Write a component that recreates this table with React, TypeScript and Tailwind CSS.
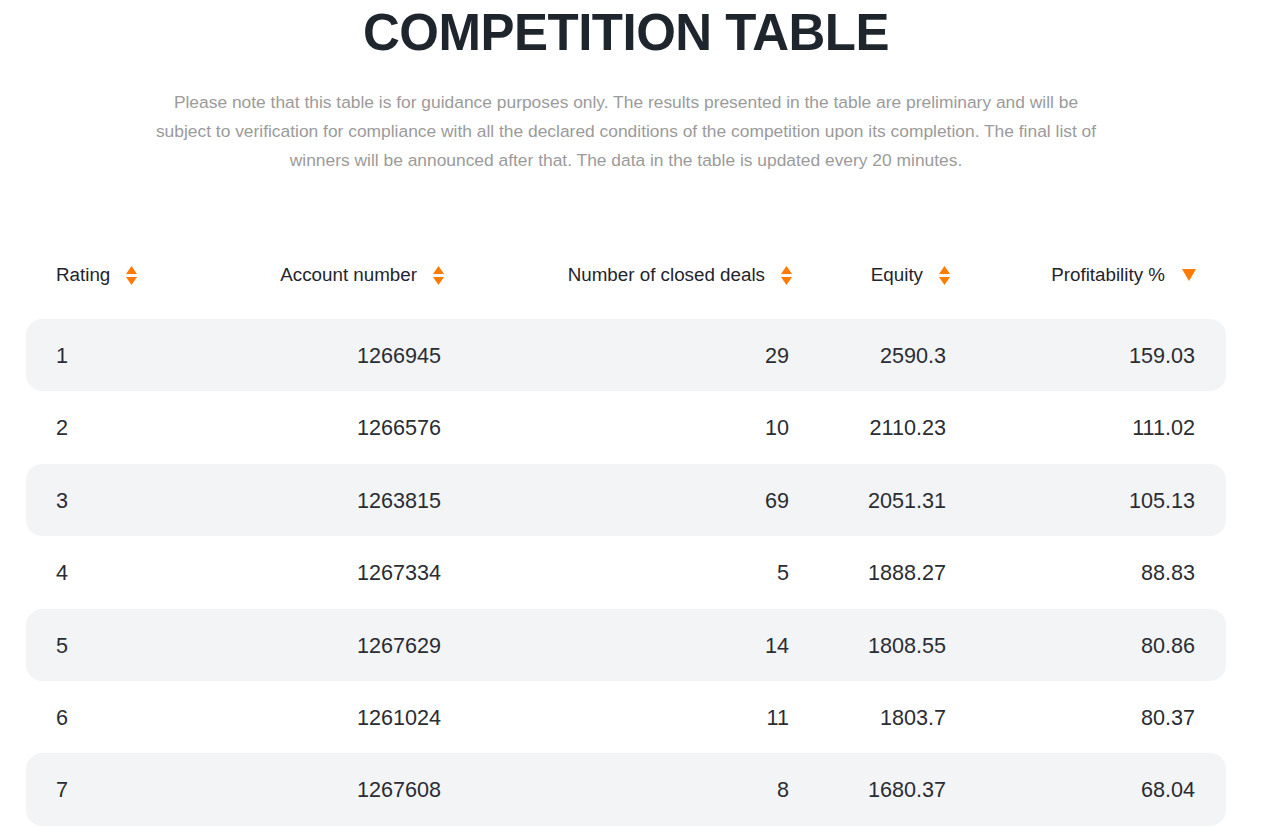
import React from "react";

const rows = [
  ["1", "1266945", "29", "2590.3", "159.03"],
  ["2", "1266576", "10", "2110.23", "111.02"],
  ["3", "1263815", "69", "2051.31", "105.13"],
  ["4", "1267334", "5", "1888.27", "88.83"],
  ["5", "1267629", "14", "1808.55", "80.86"],
  ["6", "1261024", "11", "1803.7", "80.37"],
  ["7", "1267608", "8", "1680.37", "68.04"],
];

function SortIcon() {
  return (
    <svg width="11" height="19" viewBox="0 0 11 19" className="shrink-0">
      <polygon points="5.5,0 11,8 0,8" fill="#ff7a00" />
      <polygon points="0,11 11,11 5.5,19" fill="#ff7a00" />
    </svg>
  );
}

function DownIcon() {
  return (
    <svg width="14" height="12" viewBox="0 0 14 12" className="shrink-0">
      <polygon points="0,0 14,0 7,12" fill="#ff7a00" />
    </svg>
  );
}

const grid = "grid grid-cols-[150px_238px_348px_158px_246px]";

export default function App() {
  return (
    <div
      className="bg-white min-h-[833px] w-full overflow-hidden"
      style={{ fontFamily: '"Liberation Sans", Arial, sans-serif' }}
    >
      <div className="ml-[26px] w-[1200px]">
        <h1 className="pt-[7px] text-center text-[51px] leading-[51px] font-bold tracking-[-0.5px] text-[#1f252d]">
          COMPETITION TABLE
        </h1>
        <p className="mx-auto mt-[30px] max-w-[956px] text-center text-[17.4px] leading-[29px] text-[#9b9b9b]">
          Please note that this table is for guidance purposes only. The results presented in the table are preliminary and will be subject to verification for compliance with all the declared conditions of the competition upon its completion. The final list of winners will be announced after that. The data in the table is updated every 20 minutes.
        </p>

        <div className={`${grid} mt-[75px] h-[50px] items-center px-[30px] text-[18.8px] text-[#1f252d]`}>
          <div className="flex items-center gap-[16px]">
            <span>Rating</span>
            <SortIcon />
          </div>
          <div className="flex items-center justify-end gap-[16px]">
            <span>Account number</span>
            <SortIcon />
          </div>
          <div className="flex items-center justify-end gap-[16px]">
            <span>Number of closed deals</span>
            <SortIcon />
          </div>
          <div className="flex items-center justify-end gap-[16px]">
            <span>Equity</span>
            <SortIcon />
          </div>
          <div className="flex items-center justify-end gap-[17px]">
            <span>Profitability %</span>
            <DownIcon />
          </div>
        </div>

        <div className="mt-[19px] flex flex-col">
          {rows.map((r, i) => (
            <div
              key={i}
              className={`${grid} h-[72.4px] items-center rounded-[16px] px-[30px] text-[21.6px] text-[#2a2d33] ${
                i % 2 === 0 ? "bg-[#f3f4f6]" : "bg-white"
              }`}
            >
              <div className="pt-[2px]">{r[0]}</div>
              <div className="pr-[3px] pt-[2px] text-right">{r[1]}</div>
              <div className="pr-[3px] pt-[2px] text-right">{r[2]}</div>
              <div className="pr-[4px] pt-[2px] text-right">{r[3]}</div>
              <div className="pr-[1px] pt-[2px] text-right">{r[4]}</div>
            </div>
          ))}
        </div>
      </div>
    </div>
  );
}
